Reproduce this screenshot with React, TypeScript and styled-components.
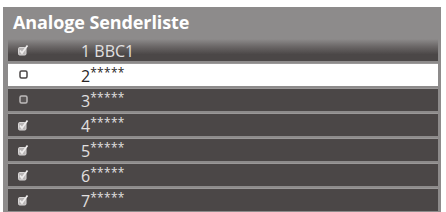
import React from "react";
import styled, { createGlobalStyle } from "styled-components";

const Global = createGlobalStyle`
	body {
		margin: 0;
		background: #ffffff;
		font-family: "Open Sans", "Noto Sans", sans-serif;
	}
`;

const Panel = styled.div`
	margin: 7px 0 0 3px;
	width: 438px;
	height: 205px;
	box-sizing: border-box;
	background: #8d8b8b;
	padding: 0 3px 1px 5px;
	display: flex;
	flex-direction: column;
`;

const Title = styled.div`
	height: 33px;
	display: flex;
	align-items: center;
	padding: 0 0 2px 5px;
	box-sizing: border-box;
	color: #ffffff;
	font-size: 18px;
	font-weight: 700;
	letter-spacing: -0.1px;
`;

const List = styled.div`
	flex: 1;
	display: flex;
	flex-direction: column;
	gap: 2.5px;
`;

const Row = styled.div<{ $selected?: boolean; $first?: boolean }>`
	height: 22.5px;
	display: flex;
	align-items: center;
	background: ${(p) =>
		p.$selected
			? "#ffffff"
			: p.$first
			? "linear-gradient(#8d8b8b 0%, #6a6666 35%, #4b4747 70%)"
			: "#4b4747"};
	color: ${(p) => (p.$selected ? "#2a2626" : "#e2e0e0")};
	font-size: 16px;
	box-shadow: ${(p) => (p.$first ? "none" : "0 -1px 0 #9a9898")};
`;

const Box = styled.span`
	width: 14px;
	margin-left: 8px;
	display: flex;
	align-items: center;
	justify-content: center;
`;

const Label = styled.span`
	margin-left: 51px;
	line-height: 1;
	padding-top: 2px;
`;

const Stars = styled.span`
	font-size: 12px;
	vertical-align: 5px;
	letter-spacing: 0.3px;
`;

const Checked = () => (
	<svg width="12" height="12" viewBox="0 0 12 12">
		<rect x="1.5" y="3.5" width="7.5" height="7.5" rx="1.2" fill="#b9b6b6" stroke="#d8d6d6" strokeWidth="1" />
		<path d="M3 6.5 L5 9 L10.5 1.5" fill="none" stroke="#efeded" strokeWidth="1.7" />
	</svg>
);

const Unchecked = ({ light }: { light?: boolean }) => (
	<svg width="9" height="9" viewBox="0 0 9 9">
		<rect
			x="1"
			y="1"
			width="7"
			height="7"
			rx="1.5"
			fill={light ? "#ffffff" : "#5a5656"}
			stroke={light ? "#4a4646" : "#bdbaba"}
			strokeWidth="1.5"
		/>
	</svg>
);

const channels = [
	{ num: "1", name: " BBC1", on: true },
	{ num: "2", stars: true, on: false },
	{ num: "3", stars: true, on: false },
	{ num: "4", stars: true, on: true },
	{ num: "5", stars: true, on: true },
	{ num: "6", stars: true, on: true },
	{ num: "7", stars: true, on: true },
];

export default function App() {
	return (
		<>
			<Global />
			<Panel>
				<Title>Analoge Senderliste</Title>
				<List>
					{channels.map((c, i) => (
						<Row key={c.num} $first={i === 0} $selected={i === 1}>
							<Box>{c.on ? <Checked /> : <Unchecked light={i === 1} />}</Box>
							<Label>
								{c.num}
								{c.stars ? <Stars>*****</Stars> : c.name}
							</Label>
						</Row>
					))}
				</List>
			</Panel>
		</>
	);
}
